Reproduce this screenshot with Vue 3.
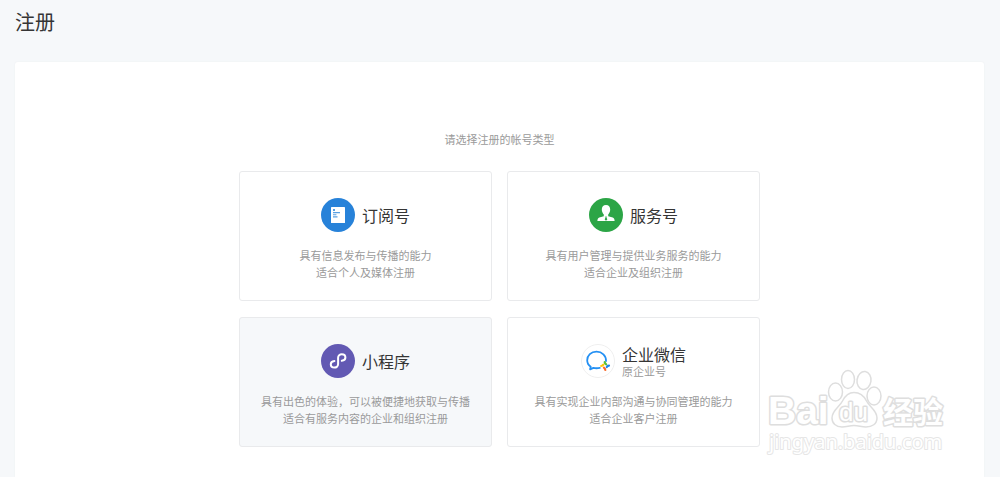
<script setup>
const accounts = [
  { id: 'subscription', name: '订阅号', lines: ['具有信息发布与传播的能力', '适合个人及媒体注册'] },
  { id: 'service', name: '服务号', lines: ['具有用户管理与提供业务服务的能力', '适合企业及组织注册'] },
  { id: 'mini', name: '小程序', lines: ['具有出色的体验，可以被便捷地获取与传播', '适合有服务内容的企业和组织注册'], active: true },
  { id: 'work', name: '企业微信', note: '原企业号', lines: ['具有实现企业内部沟通与协同管理的能力', '适合企业客户注册'] },
]
</script>

<template>
  <div class="page">
    <h1 class="title">注册</h1>
    <main class="panel">
      <p class="prompt">请选择注册的帐号类型</p>
      <div class="cards">
        <a v-for="a in accounts" :key="a.id" href="#" class="card" :class="{ active: a.active }">
          <span class="head">
            <svg v-if="a.id === 'subscription'" class="icon" viewBox="0 0 34 34" aria-hidden="true">
              <circle cx="17" cy="17" r="17" fill="#2782d9" />
              <rect x="10" y="9" width="14" height="16" rx="0.6" fill="#fff" />
              <path d="M12 11h2v2h-2zM12 14h7v1.200h-7zM12 16.200h3.400v1.100H12zM12 18.300h4.500v1.200H12z" fill="#5aa0e2" />
            </svg>
            <svg v-else-if="a.id === 'service'" class="icon" viewBox="0 0 34 34" aria-hidden="true">
              <circle cx="17" cy="17" r="17" fill="#2ca546" />
              <path d="M17 7c2.800 0 4.200 1.900 4.200 4.600 0 2.100-.9 3.900-2 4.900v1.700l4.500 1.400c1.300.5 1.900 1.500 1.900 3.400H8.400c0-1.900.6-2.900 1.900-3.400l4.500-1.400v-1.700c-1.100-1-2-2.800-2-4.900C12.800 8.900 14.200 7 17 7z" fill="#fff" />
              <path d="M16.300 18.600h1.400l-.2 1 .8 2-1.300 1.100-1.300-1.100.8-2z" fill="#2ca546" />
            </svg>
            <svg v-else-if="a.id === 'mini'" class="icon" viewBox="0 0 34 34" aria-hidden="true">
              <circle cx="17" cy="17" r="17" fill="#6259b3" />
              <path d="M20.800 16.800c2.200-.2 3.600-1.500 3.600-3.300 0-2-1.600-3.300-3.600-3.300s-3.700 1.400-3.700 3.500v6.400c0 2.100-1.700 3.500-3.700 3.500s-3.600-1.300-3.600-3.300c0-1.800 1.400-3.100 3.600-3.300" fill="none" stroke="#fff" stroke-width="2" stroke-linecap="round" />
            </svg>
            <svg v-else class="icon" viewBox="0 0 34 34" aria-hidden="true">
              <circle cx="17" cy="17" r="16.500" fill="#fff" stroke="#efefef" />
              <path d="M25 17c.2-5.500-4-9.300-9.500-9.300s-9.300 3.800-9.300 8.600c0 2.800 1.400 5.100 3.500 6.500l-.6 2.500 3.300-1.400c2.100.5 4.100.5 6.400 0" fill="none" stroke="#2490f3" stroke-width="1.800" stroke-linejoin="round" stroke-linecap="round" />
              <g fill="none" stroke-width="2.200" stroke-linecap="round">
                <path d="M23.700 18.200c.2 1 .7 1.700 1.500 2.200" stroke="#5ac13a" />
                <path d="M28 21.600c-1 .1-1.700.6-2.200 1.400" stroke="#1b86ee" />
                <path d="M24.300 26c-.1-1-.6-1.700-1.400-2.300" stroke="#fa6b2d" />
                <path d="M20.200 22c1 0 1.700-.5 2.200-1.300" stroke="#fcc60b" />
              </g>
            </svg>
            <span class="names">
              <strong class="name">{{ a.name }}</strong>
              <small v-if="a.note" class="note">{{ a.note }}</small>
            </span>
          </span>
          <span v-for="line in a.lines" :key="line" class="line">{{ line }}</span>
        </a>
      </div>
    </main>
    <svg class="mark" viewBox="0 0 190 95" aria-hidden="true">
      <g class="outline">
        <text x="8" y="59" class="latin">Bai</text>
        <ellipse cx="75.500" cy="27" rx="7" ry="9" />
        <ellipse cx="88" cy="14.500" rx="6.500" ry="9" />
        <ellipse cx="104" cy="15.500" rx="7" ry="9" transform="rotate(8 104 15.500)" />
        <ellipse cx="114" cy="31" rx="7" ry="9" />
        <path d="M94 27.500c6.500 0 10 3.500 12.500 8.500 3 6 10.500 9 10.500 17 0 6-5 9-11 9-5 0-7-1.500-12-1.500S87 62 82 62c-6 0-10-3.500-10-9 0-8 7.500-11 10.500-17 2.500-5 5.500-8.500 11.500-8.500z" />
        <text x="79" y="56" class="du">du</text>
        <text x="123" y="58" class="han">经验</text>
        <text x="9" y="84" class="site">jingyan.baidu.com</text>
      </g>
    </svg>
  </div>
</template>

<style>
body {
  margin: 0;
  background: #f6f8fa;
}
</style>

<style scoped>
.page {
  position: relative;
  display: flex;
  flex-direction: column;
  box-sizing: border-box;
  min-height: 100vh;
  padding: 8px 16px 0 15px;
  background: #f6f8fa;
  color: #353535;
  font-family: "Noto Sans CJK SC", sans-serif;
}
.title {
  margin: 0 0 26px;
  font-size: 20px;
  line-height: 28px;
  font-weight: 400;
}
.panel {
  flex: 1;
  padding: 69px 16px 28px;
  border-radius: 3px 3px 0 0;
  background: #fff;
  box-shadow: 0 0 2px #eceef0;
}
.prompt {
  margin: 0 0 23px;
  color: #9a9a9a;
  font-size: 11px;
  line-height: 17px;
  text-align: center;
}
.cards {
  display: grid;
  grid-template-columns: repeat(2, minmax(0, 1fr));
  gap: 16px 15px;
  max-width: 521px;
  margin: 0 auto;
}
.card {
  display: flex;
  flex-direction: column;
  align-items: center;
  padding: 26px 12px 19px;
  border: 1px solid #e9eaec;
  border-radius: 3px;
  color: #9a9a9a;
  font-size: 11px;
  line-height: 17px;
  text-decoration: none;
}
.card.active {
  background: #f6f8fa;
}
.head {
  display: flex;
  align-items: center;
  gap: 7px;
  height: 34px;
  margin-bottom: 15px;
}
.icon {
  width: 34px;
  height: 34px;
}
.names {
  display: flex;
  flex-direction: column;
}
.name {
  color: #353535;
  font-size: 16px;
  line-height: 20px;
  font-weight: 400;
}
.note {
  font-size: 11px;
  line-height: 14px;
}
.mark {
  position: absolute;
  right: 50px;
  bottom: 17px;
  width: 190px;
  height: 95px;
  overflow: visible;
  pointer-events: none;
}
.outline {
  fill: #fff;
  stroke: #dedede;
  stroke-width: 1.5px;
}
.outline text {
  font-family: "Liberation Sans", "Noto Sans CJK SC", sans-serif;
  stroke-width: 3px;
  stroke-linejoin: round;
  paint-order: stroke;
}
.latin {
  font-size: 39px;
  font-weight: 700;
}
.du {
  font-size: 26px;
}
.han {
  font-size: 30px;
  font-weight: 700;
}
.outline .site {
  font-family: "Noto Sans", sans-serif;
  font-size: 20px;
  stroke: #e6e6e6;
  stroke-width: 2px;
}
</style>
